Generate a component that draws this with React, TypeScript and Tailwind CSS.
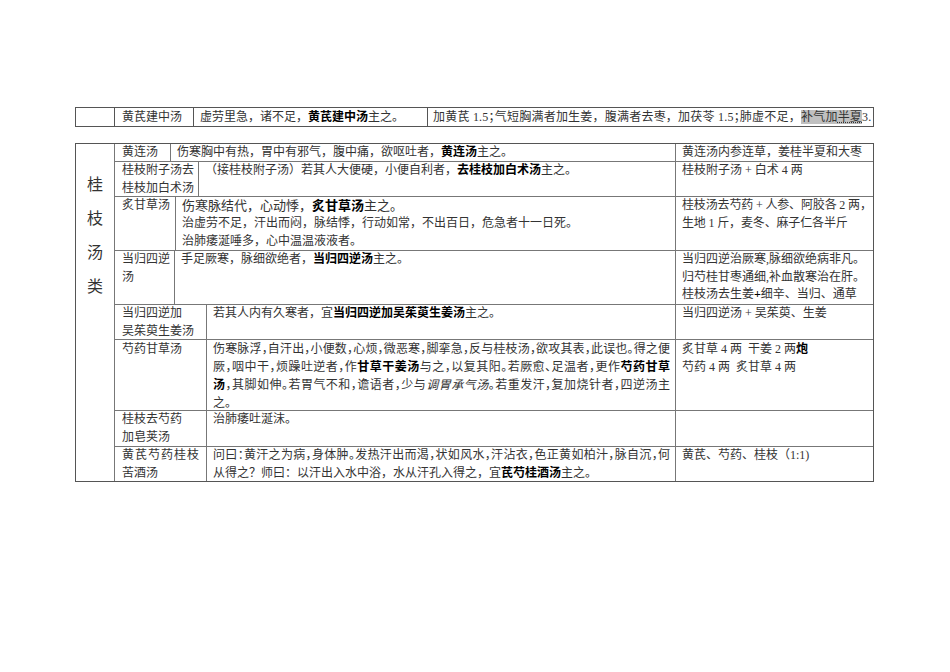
import React from "react";

const B = ({ children }: { children: React.ReactNode }) => (
  <span className="font-bold text-black">{children}</span>
);

const H = ({ children }: { children: React.ReactNode }) => (
  <span className="[font-feature-settings:'halt']">{children}</span>
);

const J = ({ children }: { children: React.ReactNode }) => (
  <div className="text-justify [text-align-last:justify] [font-feature-settings:'halt']">{children}</div>
);

export default function App() {
  return (
    <div className="min-h-[672px] w-[950px] bg-white pt-[107px] font-['Liberation_Serif','Noto_Sans_CJK_SC',serif] text-[12px] leading-[17.5px] text-[#333]">
      {/* top table */}
      <div className="ml-[75px] flex h-[20px] w-[799px] border border-[#555] leading-[18px]">
        <div className="w-[39px] border-r border-[#555]" />
        <div className="w-[79px] whitespace-nowrap border-r border-[#555] pl-[7px]">黄芪建中汤</div>
        <div className="w-[234px] whitespace-nowrap border-r border-[#555] pl-[6px]">
          虚劳里急，诸不足，<B>黄芪建中汤</B>主之。
        </div>
        <div className="flex-1 whitespace-nowrap pl-[5px] tracking-[0.22px]">
          加黄芪 1.5<H>；</H>气短胸满者加生姜，腹满者去枣，加茯苓 1.5<H>；</H>肺虚不足，
          <span className="bg-[#c0c0c0]">
            补气加<span className="underline decoration-dotted">半夏</span>
          </span>
          3.
        </div>
      </div>

      {/* main table */}
      <div className="ml-[75px] mt-[16px] flex h-[339px] w-[799px] border border-[#555]">
        <div className="w-[39px] shrink-0 border-r border-[#777] pt-[24px] text-center text-[16px] leading-[34px]">
          <div>桂</div>
          <div>枝</div>
          <div>汤</div>
          <div>类</div>
        </div>
        <div className="flex flex-1 flex-col">
          {/* row 1 */}
          <div className="flex h-[18px] border-b border-[#777] leading-[17px]">
            <div className="w-[56px] shrink-0 whitespace-nowrap border-r border-[#777] pl-[7px]">黄连汤</div>
            <div className="flex-1 whitespace-nowrap pl-[6px]">
              伤寒胸中有热，胃中有邪气，腹中痛，欲呕吐者，<B>黄连汤</B>主之。
            </div>
            <div className="w-[198px] shrink-0 whitespace-nowrap border-l border-[#777] pl-[6px]">
              黄连汤内参连草，姜桂半夏和大枣
            </div>
          </div>
          {/* row 2 */}
          <div className="flex h-[35px] border-b border-[#777]">
            <div className="w-[84px] shrink-0 whitespace-nowrap border-r border-[#777] pl-[7px]">
              <div>桂枝附子汤去</div>
              <div>桂枝加白术汤</div>
            </div>
            <div className="flex-1 whitespace-nowrap pl-[6px]">
              （接桂枝附子汤）若其人大便硬，小便自利者，<B>去桂枝加白术汤</B>主之。
            </div>
            <div className="w-[198px] shrink-0 whitespace-nowrap border-l border-[#777] pl-[6px]">
              桂枝附子汤 + 白术 4 两
            </div>
          </div>
          {/* row 3 */}
          <div className="flex h-[54px] border-b border-[#777]">
            <div className="w-[61px] shrink-0 whitespace-nowrap border-r border-[#777] pl-[7px]">炙甘草汤</div>
            <div className="flex-1 whitespace-nowrap pl-[6px]">
              <div className="text-[13px] leading-[18px]">
                伤寒脉结代，心动悸，<B>炙甘草汤</B>主之。
              </div>
              <div>治虚劳不足，汗出而闷，脉结悸，行动如常，不出百日，危急者十一日死。</div>
              <div>治肺痿涎唾多，心中温温液液者。</div>
            </div>
            <div className="w-[198px] shrink-0 whitespace-nowrap border-l border-[#777] pl-[6px] tracking-[-0.15px]">
              <div>
                桂枝汤去芍药 + 人参、阿胶各 2 两<H>，</H>
              </div>
              <div>生地 1 斤，麦冬、麻子仁各半斤</div>
            </div>
          </div>
          {/* row 4 */}
          <div className="flex h-[54px] border-b border-[#777]">
            <div className="w-[60px] shrink-0 whitespace-nowrap border-r border-[#777] pl-[7px]">
              <div>当归四逆</div>
              <div>汤</div>
            </div>
            <div className="flex-1 whitespace-nowrap pl-[6px]">
              手足厥寒，脉细欲绝者，<B>当归四逆汤</B>主之。
            </div>
            <div className="w-[198px] shrink-0 whitespace-nowrap border-l border-[#777] pl-[6px]">
              <div>当归四逆治厥寒,脉细欲绝病非凡。</div>
              <div>归芍桂甘枣通细,补血散寒治在肝。</div>
              <div>
                桂枝汤去生姜<B>+</B>细辛、当归、通草
              </div>
            </div>
          </div>
          {/* row 5 */}
          <div className="flex h-[35px] border-b border-[#777]">
            <div className="w-[92px] shrink-0 whitespace-nowrap border-r border-[#777] pl-[7px]">
              <div>当归四逆加</div>
              <div>吴茱萸生姜汤</div>
            </div>
            <div className="flex-1 whitespace-nowrap pl-[6px]">
              若其人内有久寒者，宜<B>当归四逆加吴茱萸生姜汤</B>主之。
            </div>
            <div className="w-[198px] shrink-0 whitespace-nowrap border-l border-[#777] pl-[6px]">
              当归四逆汤 + 吴茱萸、生姜
            </div>
          </div>
          {/* row 6 */}
          <div className="flex h-[71px] border-b border-[#777] leading-[18px]">
            <div className="w-[92px] shrink-0 whitespace-nowrap border-r border-[#777] pl-[7px]">芍药甘草汤</div>
            <div className="min-w-0 flex-1 pl-[6px] pr-[5px]">
              <J>伤寒脉浮，自汗出，小便数，心烦，微恶寒，脚挛急，反与桂枝汤，欲攻其表，此误也。得之便</J>
              <J>
                厥，咽中干，烦躁吐逆者，作<B>甘草干姜汤</B>与之，以复其阳。若厥愈、足温者，更作<B>芍药甘草</B>
              </J>
              <J>
                <B>汤</B>，其脚如伸。若胃气不和，谵语者，少与<i>调胃承气汤</i>。若重发汗，复加烧针者，四逆汤主
              </J>
              <div>之。</div>
            </div>
            <div className="w-[198px] shrink-0 whitespace-nowrap border-l border-[#777] pl-[6px]">
              <div>
                炙甘草 4 两&nbsp;&nbsp;干姜 2 两<B>炮</B>
              </div>
              <div>芍药 4 两&nbsp;&nbsp;炙甘草 4 两</div>
            </div>
          </div>
          {/* row 7 */}
          <div className="flex h-[36px] border-b border-[#777]">
            <div className="w-[92px] shrink-0 whitespace-nowrap border-r border-[#777] pl-[7px]">
              <div>桂枝去芍药</div>
              <div>加皂荚汤</div>
            </div>
            <div className="flex-1 whitespace-nowrap pl-[6px]">治肺痿吐涎沫。</div>
            <div className="w-[198px] shrink-0 border-l border-[#777]" />
          </div>
          {/* row 8 */}
          <div className="flex h-[34px]">
            <div className="w-[92px] shrink-0 border-r border-[#777] pl-[7px] pr-[7px]">
              <div className="text-justify [text-align-last:justify]">黄芪芍药桂枝</div>
              <div>苦酒汤</div>
            </div>
            <div className="min-w-0 flex-1 pl-[6px] pr-[5px]">
              <J>问曰：黄汗之为病，身体肿。发热汗出而渴，状如风水，汗沾衣，色正黄如柏汁，脉自沉，何</J>
              <div className="whitespace-nowrap">
                从得之？师曰：以汗出入水中浴，水从汗孔入得之，宜<B>芪芍桂酒汤</B>主之。
              </div>
            </div>
            <div className="w-[198px] shrink-0 whitespace-nowrap border-l border-[#777] pl-[6px]">
              黄芪、芍药、桂枝（1:1)
            </div>
          </div>
        </div>
      </div>
    </div>
  );
}
